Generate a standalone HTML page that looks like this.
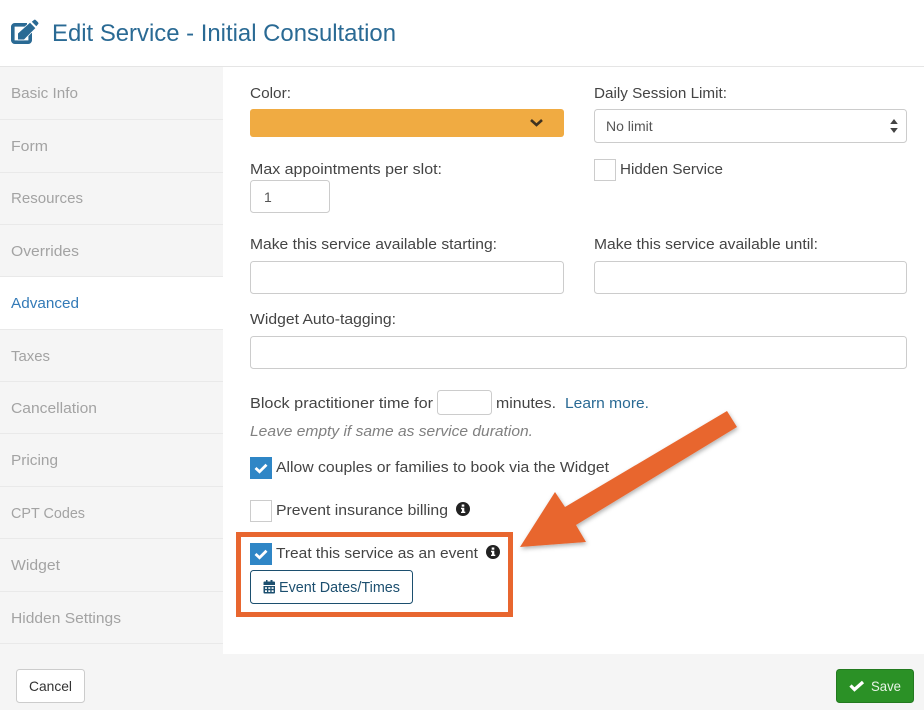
<!DOCTYPE html>
<html><head><meta charset="utf-8"><style>
html,body{margin:0;padding:0;background:#fff;width:924px;height:710px;overflow:hidden}
svg{display:block}
text{font-family:"Liberation Sans",sans-serif;font-size:15px;fill:#444}
.s{fill:#a3a3a3}
.b{fill:#fff;stroke:#ccc;stroke-width:1}
</style></head><body>
<svg width="924" height="710" viewBox="0 0 924 710" xmlns="http://www.w3.org/2000/svg">
<defs><filter id="sh" x="-10%" y="-10%" width="125%" height="125%"><feDropShadow dx="1" dy="2" stdDeviation="2" flood-color="#000" flood-opacity=".3"/></filter></defs>
<rect width="924" height="710" fill="#fff"/>
<!-- header -->
<path fill="none" stroke="#2a6a94" stroke-width="3.600" d="M30.200 33v7.200a2 2 0 0 1-2 2H14.800a2 2 0 0 1-2-2V26.800a2 2 0 0 1 2-2H27"/>
<path fill="#2a6a94" stroke="#fff" stroke-width="1.500" paint-order="stroke" d="M18 39.500V33.500L30 22.800l5.300 5.300L24 39.500z"/>
<path fill="#2a6a94" d="M31.800 21.800l2-1.700a1.500 1.500 0 0 1 2 0l2.200 2.200a1.500 1.500 0 0 1 0 2l-1.700 2z"/>
<text x="52" y="41" style="font-size:24px;fill:#2a6a94" textLength="344" lengthAdjust="spacingAndGlyphs">Edit Service - Initial Consultation</text>
<rect y="66" width="924" height="1" fill="#e5e5e5"/>
<!-- sidebar -->
<rect y="67" width="223" height="587" fill="#f5f5f5"/>
<rect y="277" width="223" height="52" fill="#fff"/>
<g fill="#e9e9e9">
<rect y="119" width="223" height="1"/><rect y="172" width="223" height="1"/><rect y="224" width="223" height="1"/><rect y="276" width="223" height="1"/><rect y="329" width="223" height="1"/><rect y="381" width="223" height="1"/><rect y="433" width="223" height="1"/><rect y="486" width="223" height="1"/><rect y="538" width="223" height="1"/><rect y="591" width="223" height="1"/><rect y="643" width="223" height="1"/>
</g>
<text class="s" x="11" y="98" textLength="67" lengthAdjust="spacingAndGlyphs">Basic Info</text>
<text class="s" x="11" y="151" textLength="37" lengthAdjust="spacingAndGlyphs">Form</text>
<text class="s" x="11" y="203" textLength="72" lengthAdjust="spacingAndGlyphs">Resources</text>
<text class="s" x="11" y="256" textLength="68" lengthAdjust="spacingAndGlyphs">Overrides</text>
<text x="11" y="308" style="fill:#337ab7" textLength="68" lengthAdjust="spacingAndGlyphs">Advanced</text>
<text class="s" x="11" y="361" textLength="39" lengthAdjust="spacingAndGlyphs">Taxes</text>
<text class="s" x="11" y="413" textLength="86" lengthAdjust="spacingAndGlyphs">Cancellation</text>
<text class="s" x="11" y="465" textLength="47" lengthAdjust="spacingAndGlyphs">Pricing</text>
<text class="s" x="11" y="518" textLength="74" lengthAdjust="spacingAndGlyphs">CPT Codes</text>
<text class="s" x="11" y="570" textLength="49" lengthAdjust="spacingAndGlyphs">Widget</text>
<text class="s" x="11" y="623" textLength="110" lengthAdjust="spacingAndGlyphs">Hidden Settings</text>
<!-- form -->
<text x="250" y="98" textLength="41" lengthAdjust="spacingAndGlyphs">Color:</text>
<rect x="250" y="109" width="314" height="28" rx="3" fill="#f0ab42"/>
<path d="M531 120l5.500 5 5.500-5" fill="none" stroke="#3f3220" stroke-width="2.600"/>
<text x="594" y="98" textLength="133" lengthAdjust="spacingAndGlyphs">Daily Session Limit:</text>
<rect class="b" x="594.500" y="109.500" width="312" height="33" rx="3"/>
<text x="606" y="131" style="font-size:14px;fill:#555">No limit</text>
<path d="M894 119l-3.800 5h7.600zM894 133l-3.800-5h7.600z" fill="#444"/>
<rect class="b" x="594.500" y="159.500" width="21" height="21"/>
<text x="620" y="174" textLength="103" lengthAdjust="spacingAndGlyphs">Hidden Service</text>
<text x="250" y="174" textLength="192" lengthAdjust="spacingAndGlyphs">Max appointments per slot:</text>
<rect class="b" x="250.500" y="180.500" width="79" height="32" rx="3"/>
<text x="264" y="202" style="font-size:14px;fill:#555">1</text>
<text x="250" y="249" textLength="247" lengthAdjust="spacingAndGlyphs">Make this service available starting:</text>
<text x="594" y="249" textLength="224" lengthAdjust="spacingAndGlyphs">Make this service available until:</text>
<rect class="b" x="250.500" y="261.500" width="313" height="32" rx="3"/>
<rect class="b" x="594.500" y="261.500" width="312" height="32" rx="3"/>
<text x="250" y="324" textLength="146" lengthAdjust="spacingAndGlyphs">Widget Auto-tagging:</text>
<rect class="b" x="250.500" y="336.500" width="656" height="32" rx="3"/>
<text x="250" y="408" textLength="183" lengthAdjust="spacingAndGlyphs">Block practitioner time for</text>
<rect class="b" x="437.500" y="390.500" width="54" height="24" rx="3"/>
<text x="496" y="408" textLength="60" lengthAdjust="spacingAndGlyphs">minutes.</text>
<text x="565" y="408" style="fill:#2a6a94" textLength="84" lengthAdjust="spacingAndGlyphs">Learn more.</text>
<text x="250" y="436" style="font-style:italic;fill:#808080" textLength="283" lengthAdjust="spacingAndGlyphs">Leave empty if same as service duration.</text>
<rect x="250" y="457" width="22" height="22" fill="#2f86c6"/>
<path d="M255.500 468l4 3.700 7-7" fill="none" stroke="#fff" stroke-width="2.800"/>
<text x="276" y="472" textLength="333" lengthAdjust="spacingAndGlyphs">Allow couples or families to book via the Widget</text>
<rect class="b" x="250.500" y="500.500" width="21" height="21"/>
<text x="276" y="515" textLength="172" lengthAdjust="spacingAndGlyphs">Prevent insurance billing</text>
<circle cx="463" cy="509" r="7" fill="#222"/>
<rect x="461.700" y="504.500" width="2.600" height="2.200" fill="#fff"/>
<path d="M461 507.800h3.300v3.800h1v1.400H461v-1.400h1v-2.400h-1z" fill="#fff"/>
<!-- highlight -->
<rect x="238.500" y="534.500" width="272" height="80" fill="none" stroke="#e8662f" stroke-width="5"/>
<rect x="250" y="543" width="22" height="22" fill="#2f86c6"/>
<path d="M255.500 554l4 3.700 7-7" fill="none" stroke="#fff" stroke-width="2.800"/>
<text x="276" y="558" textLength="202" lengthAdjust="spacingAndGlyphs">Treat this service as an event</text>
<circle cx="493" cy="552" r="7" fill="#222"/>
<rect x="491.700" y="547.500" width="2.600" height="2.200" fill="#fff"/>
<path d="M491 550.800h3.300v3.800h1v1.400H491v-1.400h1v-2.400h-1z" fill="#fff"/>
<rect x="250.500" y="570.500" width="162" height="33" rx="3" fill="#fff" stroke="#1c4f6f"/>
<path fill="#1c4f6f" fill-rule="evenodd" d="M263.500 585v-2.500a1 1 0 0 1 1-1h1.500V580h1.500v1.500h3V580H272.500v1.500H274a1 1 0 0 1 1 1V585z M263.500 586h11.500v6.500a1 1 0 0 1-1 1h-9.500a1 1 0 0 1-1-1z M265 587.300v1.600h2v-1.600z M268.300 587.300v1.600h2v-1.600z M271.600 587.300v1.600h2v-1.600z M265 590.200v1.800h2v-1.800z M268.300 590.200v1.800h2v-1.800z M271.600 590.200v1.800h2v-1.800z"/>
<text x="279" y="592" style="fill:#1c4f6f" textLength="121" lengthAdjust="spacingAndGlyphs">Event Dates/Times</text>
<!-- arrow -->
<path d="M727 411 737 427 576 525 586 542 520 547 555 492 565 507z" fill="#e8662f" filter="url(#sh)"/>
<!-- footer -->
<rect y="654" width="924" height="56" fill="#f5f5f5"/>
<rect class="b" x="16.500" y="669.500" width="68" height="33" rx="3"/>
<text x="29" y="691" style="font-size:14px;fill:#333" textLength="43" lengthAdjust="spacingAndGlyphs">Cancel</text>
<rect x="836.500" y="669.500" width="77" height="33" rx="3" fill="#2b9126" stroke="#237a1f"/>
<path d="M850.500 685.500l4 4 8.500-7.500" fill="none" stroke="#fff" stroke-width="3.200"/>
<text x="871" y="691" style="font-size:14px;fill:#e8f4e6" textLength="30" lengthAdjust="spacingAndGlyphs">Save</text>
</svg>
</body></html>
